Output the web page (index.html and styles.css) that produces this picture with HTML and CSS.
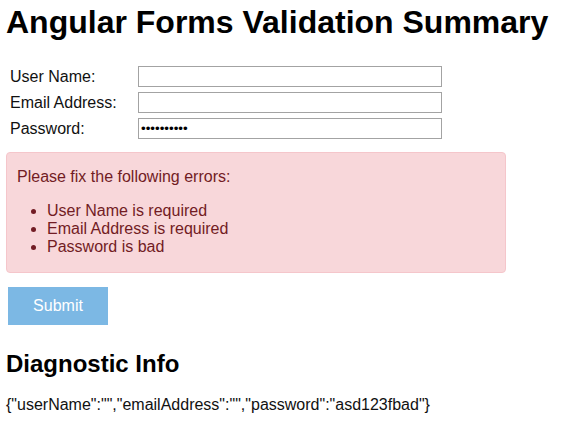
FILE: index.html
```html
<!DOCTYPE html>
<html lang="en">
<head>
<meta charset="utf-8">
<title>Angular Forms Validation Summary</title>
<link rel="stylesheet" href="styles.css">
</head>
<body>
<div class="page">
  <h1 class="title">Angular Forms Validation Summary</h1>
  <form class="form">
    <div class="fields">
      <label class="field-label" for="userName">User Name:</label>
      <input class="field-input" id="userName" type="text">
      <label class="field-label" for="emailAddress">Email Address:</label>
      <input class="field-input" id="emailAddress" type="text">
      <label class="field-label" for="password">Password:</label>
      <input class="field-input" id="password" type="password" value="asd123fbad">
    </div>
    <div class="alert">
      <div class="alert-title">Please fix the following errors:</div>
      <ul class="error-list">
        <li>User Name is required</li>
        <li>Email Address is required</li>
        <li>Password is bad</li>
      </ul>
    </div>
    <button class="submit" type="button" disabled>Submit</button>
  </form>
  <h2 class="subtitle">Diagnostic Info</h2>
  <div class="diag">{"userName":"","emailAddress":"","password":"asd123fbad"}</div>
</div>
</body>
</html>
```

FILE: styles.css
```css
html, body {
  margin: 0;
  padding: 0;
  background: #ffffff;
}

body {
  font-family: "Liberation Sans", Arial, sans-serif;
  font-size: 16px;
  color: #111111;
}

.page {
  padding: 4px 6px 0 6px;
}

.title {
  font-size: 32px;
  font-weight: bold;
  line-height: 36px;
  margin: 0 0 26px 0;
  color: #000000;
}

.form {
  margin: 0;
}

.fields {
  display: grid;
  grid-template-columns: 128px 304px;
  row-gap: 5px;
  align-items: center;
  padding-left: 4px;
}

.field-label {
  font-size: 16px;
  line-height: 18px;
  color: #111111;
}

.field-input {
  box-sizing: border-box;
  width: 304px;
  height: 21px;
  margin: 0;
  padding: 1px 2px;
  border: 1px solid #a3a3a3;
  border-radius: 0;
  font-family: "Liberation Sans", Arial, sans-serif;
  font-size: 13.33px;
  background: #ffffff;
  color: #000000;
}

.alert {
  box-sizing: border-box;
  width: 500px;
  margin-top: 13px;
  padding: 15px 10px 0 10px;
  background: #f8d7da;
  border: 1px solid #f5c6cb;
  border-radius: 4px;
  color: #721c24;
}

.alert-title {
  line-height: 18.4px;
}

.error-list {
  margin: 16px 0;
  padding-left: 30px;
  line-height: 18px;
}

.submit {
  display: block;
  width: 100px;
  height: 38px;
  margin: 14px 0 0 2px;
  padding: 0;
  border: none;
  border-radius: 0;
  background: #7cb8e4;
  color: #ffffff;
  font-family: "Liberation Sans", Arial, sans-serif;
  font-size: 16px;
}

.subtitle {
  font-size: 24px;
  font-weight: bold;
  line-height: 27px;
  margin: 25px 0 19px 0;
  color: #000000;
}

.diag {
  line-height: 18.4px;
  color: #111111;
}
```
